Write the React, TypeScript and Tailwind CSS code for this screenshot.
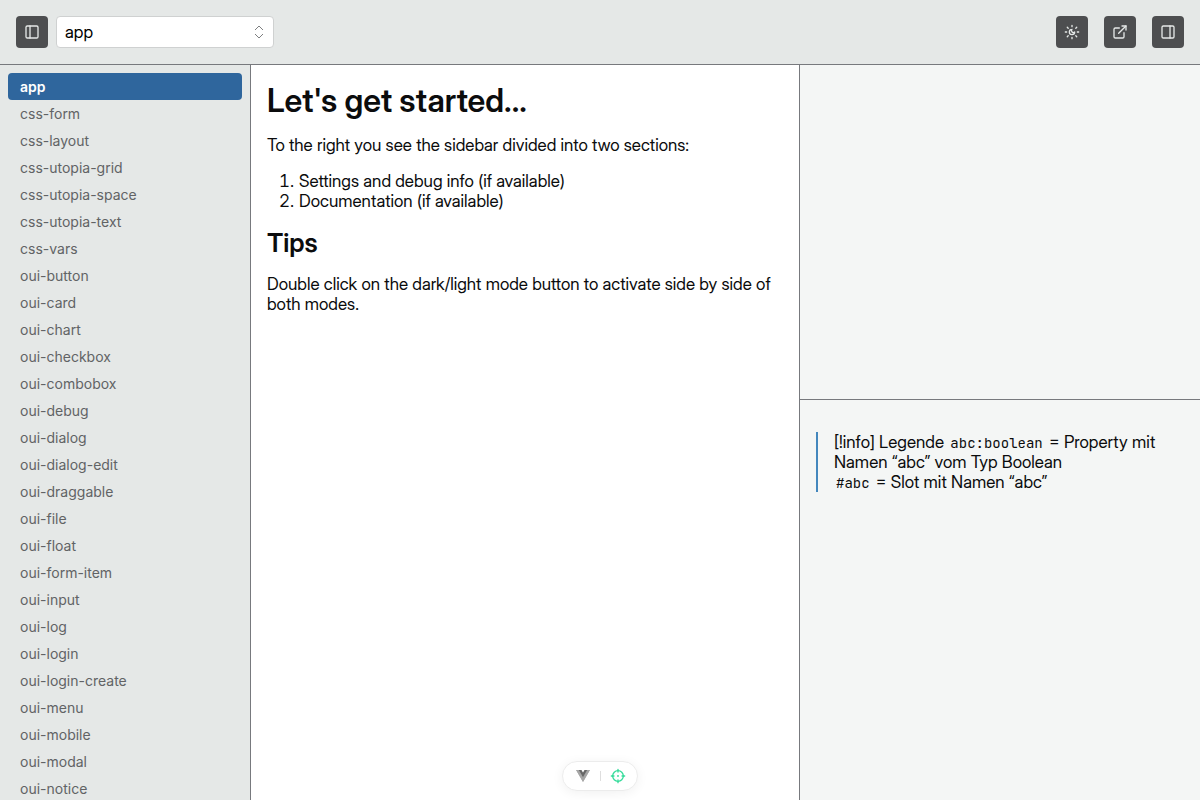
import React from "react";
import { ExternalLink, PanelLeft, PanelRight } from "lucide-react";

const stories = [
  "app", "css-form", "css-layout", "css-utopia-grid", "css-utopia-space",
  "css-utopia-text", "css-vars", "oui-button", "oui-card", "oui-chart",
  "oui-checkbox", "oui-combobox", "oui-debug", "oui-dialog", "oui-dialog-edit",
  "oui-draggable", "oui-file", "oui-float", "oui-form-item", "oui-input",
  "oui-log", "oui-login", "oui-login-create", "oui-menu", "oui-mobile",
  "oui-modal", "oui-notice",
];

function ToolButton({ label, children }: { label: string; children: React.ReactNode }) {
  return (
    <button
      type="button"
      aria-label={label}
      className="flex size-8 shrink-0 items-center justify-center rounded bg-[#4d4e50] text-[#e5e8e7]"
    >
      {children}
    </button>
  );
}

function SunMoonIcon() {
  return (
    <svg viewBox="0 0 24 24" fill="none" stroke="currentColor" strokeWidth="2" strokeLinecap="round" strokeLinejoin="round" className="size-4">
      <path d="M12 8a2.83 2.83 0 0 0 4 4 4 4 0 1 1-4-4" />
      <path d="M12 2v2M12 20v2M4.9 4.9l1.4 1.4M17.7 17.7l1.4 1.4M2 12h2M20 12h2M6.3 17.7l-1.4 1.4M19.1 4.9l-1.4 1.4" />
    </svg>
  );
}

function Header() {
  return (
    <header className="flex shrink-0 items-center justify-between border-b border-[#77797d] bg-[#e5e8e7] p-4">
      <div className="flex items-center gap-2">
        <ToolButton label="Toggle navigation">
          <PanelLeft className="size-4" />
        </ToolButton>
        <div className="relative flex">
          <select
            aria-label="Story"
            defaultValue="app"
            className="h-8 w-[218px] appearance-none rounded border border-[#cfd1d1] bg-white px-2 text-[17px] text-black"
          >
            {stories.map((s) => (
              <option key={s}>{s}</option>
            ))}
          </select>
          <svg viewBox="0 0 10 16" fill="none" stroke="#5c5e60" strokeWidth="0.8" className="pointer-events-none absolute top-2 right-2.5 h-4 w-2.5">
            <path d="M1 6l4-4 4 4M1 10l4 4 4-4" />
          </svg>
        </div>
      </div>
      <div className="flex items-center gap-4">
        <ToolButton label="Toggle dark mode">
          <SunMoonIcon />
        </ToolButton>
        <ToolButton label="Open in new window">
          <ExternalLink className="size-4" />
        </ToolButton>
        <ToolButton label="Toggle sidebar">
          <PanelRight className="size-4" />
        </ToolButton>
      </div>
    </header>
  );
}

function Code({ children }: { children: React.ReactNode }) {
  return (
    <code className="px-0.5 font-['JetBrains_Mono','DejaVu_Sans_Mono',monospace] text-sm leading-[18px]">
      {children}
    </code>
  );
}

function DevtoolsPill() {
  return (
    <div className="fixed bottom-[9px] left-1/2 flex h-[30px] w-[76px] -translate-x-1/2 items-center justify-center rounded-full border border-[#ececec] bg-white shadow-[0_2px_12px_rgba(0,0,0,0.06)]">
      <button type="button" aria-label="Toggle devtools" className="flex w-[34px] justify-center">
        <svg viewBox="0 0 256 221" className="h-3 w-3.5">
          <path fill="#b4b4b4" d="M204.8 0H256L128 220.8 0 0h97.92L128 51.2 157.44 0h47.36z" />
          <path fill="#a6a6a6" d="M0 0l128 220.8L256 0h-51.2L128 132.48 50.56 0H0z" />
          <path fill="#686868" d="M50.56 0L128 133.12 204.8 0h-47.36L128 51.2 97.92 0H50.56z" />
        </svg>
      </button>
      <span className="h-2.5 w-px bg-[#dedede]" />
      <button type="button" aria-label="Inspect component" className="flex w-[34px] justify-center">
        <svg viewBox="0 0 24 24" fill="none" stroke="#35dc9b" strokeWidth="2" strokeLinecap="round" className="size-4">
          <circle cx="12" cy="12" r="8" />
          <circle cx="12" cy="12" r=".5" />
          <path d="M12 2v4M12 18v4M2 12h4M18 12h4" />
        </svg>
      </button>
    </div>
  );
}

export default function App() {
  return (
    <div className="flex h-screen flex-col overflow-hidden bg-white font-['Inter_Display','Inter',sans-serif] text-[17px] leading-5 text-[#0b0c0d]">
      <Header />
      <div className="flex min-h-0 flex-1">
        <nav className="w-[251px] shrink-0 overflow-hidden border-r border-[#77797d] bg-[#e5e8e7] p-2 font-['Inter',sans-serif] text-sm">
          {stories.map((s, i) => (
            <a
              key={s}
              href={`#${s}`}
              className={
                i === 0
                  ? "flex h-[27px] items-center rounded bg-[#2f669d] px-3 font-semibold text-white"
                  : "flex h-[27px] items-center rounded px-3 text-[#616365]"
              }
            >
              {s}
            </a>
          ))}
        </nav>
        <main className="min-w-0 flex-1 p-4">
          <h1 className="mb-3.5 text-[32px] leading-10 font-semibold">Let's get started...</h1>
          <p className="mb-4">To the right you see the sidebar divided into two sections:</p>
          <ol className="mb-4 list-decimal pl-8">
            <li>Settings and debug info (if available)</li>
            <li>Documentation (if available)</li>
          </ol>
          <h2 className="mb-[15px] text-[26px] leading-8 font-semibold">Tips</h2>
          <p>Double click on the dark/light mode button to activate side by side of both modes.</p>
        </main>
        <aside className="flex w-[401px] shrink-0 flex-col border-l border-[#77797d] bg-[#f4f6f5]">
          <section className="h-[335px] shrink-0 border-b border-[#77797d]" aria-label="Settings" />
          <section className="px-4 py-8" aria-label="Documentation">
            <blockquote className="border-l-2 border-[#4387bd] pl-4">
              [!info] Legende <Code>abc:boolean</Code> = Property mit Namen “abc” vom Typ Boolean
              <br />
              <Code>#abc</Code> = Slot mit Namen “abc”
            </blockquote>
          </section>
        </aside>
      </div>
      <DevtoolsPill />
    </div>
  );
}
